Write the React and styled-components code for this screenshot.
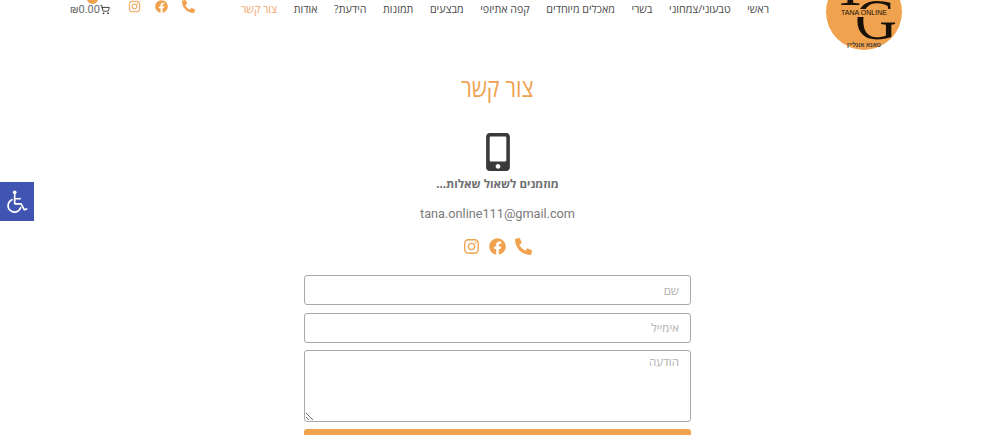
import styled, { createGlobalStyle } from "styled-components";
import { FaFacebook, FaInstagram, FaMobileAlt, FaPhoneAlt } from "react-icons/fa";
import { LuShoppingCart } from "react-icons/lu";

const NAV_ITEMS = [
  "ראשי",
  "טבעוני/צמחוני",
  "בשרי",
  "מאכלים מיוחדים",
  "קפה אתיופי",
  "מבצעים",
  "תמונות",
  "הידעת?",
  "אודות",
  "צור קשר",
];

function SocialIcons({ size, gap }) {
  return (
    <SocialRow $gap={gap}>
      <FaInstagram size={size} />
      <FaFacebook size={size} />
      <FaPhoneAlt size={size} />
    </SocialRow>
  );
}

function App() {
  return (
    <>
      <GlobalStyle />
      <Page>
        <Header>
          <Cart>
            <CartBadge />
            <CartPrice>₪0.00</CartPrice>
            <LuShoppingCart size={13} color="#222" />
          </Cart>
          <HeaderSocial>
            <SocialIcons size={13} gap={14} />
          </HeaderSocial>
          <Nav>
            {NAV_ITEMS.map((item, i) => (
              <NavItem key={item} $active={i === NAV_ITEMS.length - 1}>
                {item}
              </NavItem>
            ))}
          </Nav>
          <Logo>
            <LogoT>T</LogoT>
            <LogoG>G</LogoG>
            <LogoName>TANA ONLINE</LogoName>
            <LogoHebrew>טאנא אונליין</LogoHebrew>
          </Logo>
        </Header>
        <Main>
          <Title>צור קשר</Title>
          <PhoneIcon>
            <FaMobileAlt size={38} />
          </PhoneIcon>
          <Subtitle>מוזמנים לשאול שאלות...</Subtitle>
          <Email>tana.online111@gmail.com</Email>
          <ContactSocial>
            <SocialIcons size={17} gap={9} />
          </ContactSocial>
          <Form>
            <Input type="text" placeholder="שם" />
            <Input type="text" placeholder="אימייל" />
            <TextArea placeholder="הודעה" />
            <Submit type="button" />
          </Form>
        </Main>
        <A11yButton aria-label="נגישות">
          <svg width="24" height="26" viewBox="0 0 26 28" fill="none" stroke="#fff" strokeWidth="1.8">
            <circle cx="10.5" cy="3.5" r="2" fill="#fff" stroke="none" />
            <path d="M10.5 6v10h7l3.5 6.5 2.5-1" strokeLinecap="round" strokeLinejoin="round" />
            <path d="M10.5 10.5h6" strokeLinecap="round" />
            <path d="M7.5 11.5a7 7 0 1 0 9.5 8.5" strokeLinecap="round" />
          </svg>
        </A11yButton>
      </Page>
    </>
  );
}

const GlobalStyle = createGlobalStyle`
  html, body {
    margin: 0;
    padding: 0;
    height: 435px;
    overflow: hidden;
    background: #fff;
    font-family: "Open Sans", "Liberation Sans", sans-serif;
  }
`;

const Page = styled.div`
  width: 1000px;
  height: 435px;
  overflow: hidden;
`;

const Header = styled.header`
  display: flex;
  align-items: flex-start;
  height: 50px;
  padding-left: 70px;
`;

const Cart = styled.div`
  display: flex;
  position: relative;
  align-items: center;
  width: 40px;
  height: 17px;
  margin-top: 1px;
  color: #6b6b6b;
`;

const CartBadge = styled.span`
  position: absolute;
  left: 17px;
  top: -7px;
  width: 11px;
  height: 10px;
  border-radius: 50%;
  background: #f0a24f;
`;

const CartPrice = styled.span`
  font-family: Roboto, "Liberation Sans", sans-serif;
  font-size: 11px;
  line-height: 17px;
`;

const HeaderSocial = styled.div`
  width: 113px;
  margin-left: 18px;
`;

const SocialRow = styled.div`
  display: flex;
  align-items: center;
  gap: ${(p) => p.$gap}px;
  color: #f0a24f;
`;

const Nav = styled.nav`
  display: flex;
  flex: none;
  flex-direction: row-reverse;
  justify-content: space-between;
  width: 528px;
  padding-top: 2px;
`;

const NavItem = styled.a`
  font-size: 10.7px;
  line-height: 14px;
  white-space: nowrap;
  direction: rtl;
  color: ${(p) => (p.$active ? "#f2a56a" : "#4a4a4a")};
`;

const Logo = styled.div`
  position: relative;
  flex: none;
  width: 76px;
  height: 76px;
  margin: -26px 0 0 57px;
  border-radius: 50%;
  background: #f0a24f;
`;

const LogoT = styled.span`
  position: absolute;
  left: 6px;
  top: -14px;
  font-family: "Liberation Serif", serif;
  font-size: 60px;
  line-height: 50px;
  color: #17110a;
`;

const LogoG = styled.span`
  position: absolute;
  left: 29px;
  top: 21px;
  font-family: "Liberation Serif", serif;
  font-size: 58px;
  line-height: 50px;
  color: #17110a;
`;

const LogoName = styled.span`
  position: absolute;
  left: 6px;
  right: 6px;
  top: 35px;
  text-align: center;
  font-family: "Liberation Sans", sans-serif;
  font-size: 7px;
  line-height: 8px;
  white-space: nowrap;
  color: #17110a;
  background: #f0a24f;
`;

const LogoHebrew = styled.span`
  position: absolute;
  left: 0;
  right: 0;
  top: 67px;
  text-align: center;
  direction: rtl;
  font-family: "Liberation Sans", sans-serif;
  font-size: 6px;
  line-height: 8px;
  font-weight: 700;
  color: #333;
`;

const Main = styled.main`
  display: flex;
  flex-direction: column;
  align-items: center;
  width: 995px;
`;

const Title = styled.h1`
  margin: 21px 0 0;
  font-size: 25px;
  font-weight: 400;
  line-height: 32px;
  direction: rtl;
  transform: scaleX(0.86);
  color: #f0a24f;
`;

const PhoneIcon = styled.div`
  display: flex;
  margin-top: 30px;
  color: #3a3a3a;
`;

const Subtitle = styled.h3`
  margin: 3px 0 0;
  font-size: 11.6px;
  font-weight: 700;
  line-height: 20px;
  direction: rtl;
  color: #6f6f6f;
`;

const Email = styled.p`
  margin: 9px 0 0;
  font-family: Roboto, "Liberation Sans", sans-serif;
  font-size: 12.7px;
  line-height: 22px;
  color: #7a7a7a;
`;

const ContactSocial = styled.div`
  margin-top: 13px;
`;

const Form = styled.form`
  display: flex;
  flex-direction: column;
  gap: 7.5px;
  width: 387px;
  margin-top: 20px;
`;

const Input = styled.input`
  box-sizing: border-box;
  width: 100%;
  height: 30px;
  padding: 0 11px;
  border: 1px solid #a4a9ae;
  border-radius: 3px;
  outline: none;
  background: #fff;
  direction: rtl;
  font-family: "Open Sans", "Liberation Sans", sans-serif;
  font-size: 11.5px;

  &::placeholder {
    color: #b0b0b0;
  }
`;

const TextArea = styled.textarea`
  display: block;
  box-sizing: border-box;
  width: 100%;
  height: 71.5px;
  padding: 3px 11px;
  border: 1px solid #a4a9ae;
  border-radius: 3px;
  outline: none;
  background: #fff;
  direction: rtl;
  font-family: "Open Sans", "Liberation Sans", sans-serif;
  font-size: 11.5px;

  &::placeholder {
    color: #b0b0b0;
  }
`;

const Submit = styled.button`
  flex: none;
  width: 100%;
  height: 30px;
  border: none;
  border-radius: 3px;
  background: #f0a24f;
`;

const A11yButton = styled.div`
  position: fixed;
  left: 0;
  top: 182px;
  display: flex;
  align-items: center;
  justify-content: center;
  width: 34px;
  height: 39px;
  background: #4054b2;
`;

export default App;
